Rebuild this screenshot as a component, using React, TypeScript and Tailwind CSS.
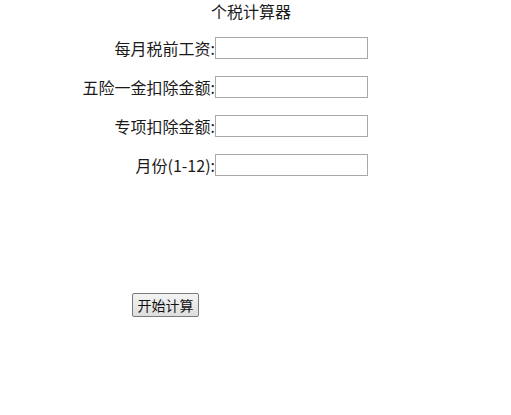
const rows = ["每月税前工资:", "五险一金扣除金额:", "专项扣除金额:", "月份(1-12):"];

export default function App() {
  return (
    <div className="min-h-screen bg-white text-[#1a1a1a] font-['Noto_Sans_CJK_SC','Noto_Sans',sans-serif]">
      <h1 className="w-[502px] text-center text-[16px] leading-[23px]">个税计算器</h1>

      <div className="flex flex-col gap-[17px] mt-[14px]">
        {rows.map((label) => (
          <div key={label} className="flex items-center">
            <label className="w-[215px] text-right text-[16px] leading-[22px]">{label}</label>
            <input
              type="text"
              className="w-[153px] h-[22px] border border-[#a9a9a9] bg-white outline-none"
            />
          </div>
        ))}
      </div>

      <div className="flex pl-[132px] mt-[117px]">
        <button className="flex items-center justify-center h-[24px] w-[67px] text-[14px] leading-none border border-[#7a7a7a] rounded-[2px] bg-gradient-to-b from-[#f4f4f4] to-[#dedede] text-[#111]">
          开始计算
        </button>
      </div>
    </div>
  );
}
